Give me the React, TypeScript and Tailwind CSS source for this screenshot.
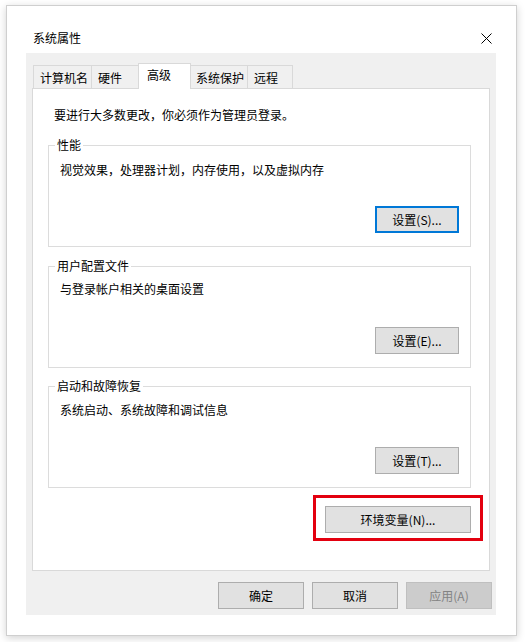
const font = { fontFamily: '"Microsoft YaHei", "Noto Sans CJK SC", sans-serif' };

const tabs = [
  { t: '计算机名', w: 'w-[59px]' },
  { t: '硬件', w: 'w-[47px]' },
  { t: '高级', w: 'w-[53px]' },
  { t: '系统保护', w: 'w-[58px]' },
  { t: '远程', w: 'w-[45px]' },
];

function Btn({ label, w = 'w-[84px]', focused = false, disabled = false }: { label: string; w?: string; focused?: boolean; disabled?: boolean }) {
  const cls = disabled
    ? 'bg-[#cccccc] border border-[#bfbfbf] text-[#838383]'
    : focused
    ? 'bg-[#e1e1e1] border-2 border-[#0078d7] text-black'
    : 'bg-[#e1e1e1] border border-[#adadad] text-black';
  return (
    <div className={`${w} h-[27px] flex items-center justify-center text-[12px] leading-[16px] ${cls}`}>
      {label}
    </div>
  );
}

function Group({ title, desc, button, focused = false, descTop }: { title: string; desc: string; button: string; focused?: boolean; descTop: string }) {
  return (
    <div className="relative h-[102px] border border-[#dcdcdc] flex flex-col">
      <span className="absolute left-[6px] top-[-9px] bg-white px-[2px] text-[12px] leading-[16px]">{title}</span>
      <p className={`pl-[11px] text-[12px] leading-[16px] ${descTop}`}>{desc}</p>
      <div className="mt-auto self-end mr-[11px] mb-[13px]">
        <Btn label={button} focused={focused} />
      </div>
    </div>
  );
}

export default function App() {
  return (
    <div className="w-[526px] h-[642px] bg-white pt-[5px] pl-[6px] text-black" style={font}>
      <div className="w-[511px] h-[631px] bg-white border border-[#cfcfcf] shadow-[0_2px_8px_rgba(0,0,0,0.18)] flex flex-col">
        {/* title bar */}
        <div className="h-[47px] flex items-start justify-between pl-[26px] pr-[24px] pt-[24px]">
          <span className="text-[12px] leading-[16px]">系统属性</span>
          <div className="h-[16px] flex items-center">
            <svg width="11" height="11" viewBox="0 0 11 11">
              <path d="M0.5 0.5 L10.5 10.5 M10.5 0.5 L0.5 10.5" stroke="#000" strokeWidth="1" />
            </svg>
          </div>
        </div>

        {/* gray body */}
        <div className="ml-[19px] w-[470px] h-[562px] bg-[#f0f0f0] pt-[10px] flex flex-col">
          <div className="flex items-end h-[25px] ml-[7px]">
            {tabs.map(({ t, w }, i) => {
              const sel = t === '高级';
              return sel ? (
                <div
                  key={t}
                  className={`${w} relative z-10 -mx-[1px] -mb-px h-[26px] pl-[8px] bg-white border border-b-0 border-[#d9d9d9] text-[12px] leading-[16px] pt-[3px]`}
                >
                  {t}
                </div>
              ) : (
                <div
                  key={t}
                  className={`${w} h-[23px] pl-[6px] border border-b-0 ${i === 0 ? '' : 'border-l-0'} border-[#d9d9d9] text-[12px] leading-[16px] pt-[4px]`}
                >
                  {t}
                </div>
              );
            })}
          </div>

          <div className="mx-[6px] h-[483px] bg-white border border-[#d9d9d9] flex flex-col">
            <p className="pl-[21px] pt-[18px] text-[12px] leading-[16px]">要进行大多数更改，你必须作为管理员登录。</p>
            <div className="ml-[15px] w-[423px] flex flex-col">
              <div className="mt-[22px]">
                <Group title="性能" desc="视觉效果，处理器计划，内存使用，以及虚拟内存" button="设置(S)..." focused descTop="pt-[16px]" />
              </div>
              <div className="mt-[19px]">
                <Group title="用户配置文件" desc="与登录帐户相关的桌面设置" button="设置(E)..." descTop="pt-[14px]" />
              </div>
              <div className="mt-[18px]">
                <Group title="启动和故障恢复" desc="系统启动、系统故障和调试信息" button="设置(T)..." descTop="pt-[15px]" />
              </div>
              <div className="self-end mt-[18px] relative">
                <Btn label="环境变量(N)..." w="w-[146px]" />
                <div className="absolute -left-[12px] -right-[12px] -top-[11px] -bottom-[8px] border-[3px] border-[#e3000f]" />
              </div>
            </div>
          </div>

          <div className="mt-[11px] flex justify-end gap-[8px] pr-[4px]">
            <Btn label="确定" w="w-[86px]" />
            <Btn label="取消" w="w-[86px]" />
            <Btn label="应用(A)" w="w-[86px]" disabled />
          </div>
        </div>
      </div>
    </div>
  );
}
